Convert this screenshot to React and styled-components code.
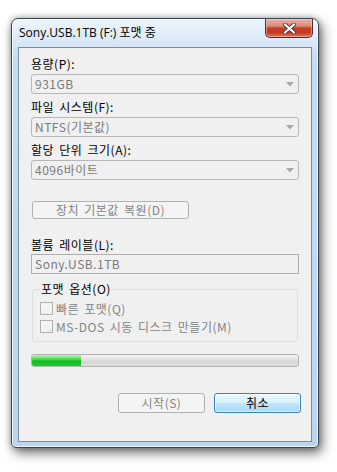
import styled, { createGlobalStyle } from "styled-components";

const Global = createGlobalStyle`
  html, body {
    margin: 0;
    background: #ffffff;
  }
  body {
    font-family: "Noto Sans CJK KR", "Noto Sans", sans-serif;
    font-size: 12px;
  }
`;

const Page = styled.div`
  padding: 18px 0 0 11px;
  width: 337px;
  height: 472px;
  box-sizing: border-box;
`;

const Window = styled.div`
  width: 308px;
  height: 430px;
  box-sizing: border-box;
  display: flex;
  flex-direction: column;
  padding: 0 6px 5px 6px;
  border: 1px solid #3a4652;
  border-radius: 7px 7px 5px 5px;
  background: linear-gradient(
    180deg,
    #eef5fc 0px,
    #dceaf8 20px,
    #c4dcf3 40px,
    #bcd5ef 100%
  );
  box-shadow: inset 0 0 0 1px rgba(255, 255, 255, 0.75),
    3px 5px 12px rgba(0, 0, 0, 0.55), 0 0 6px rgba(0, 0, 0, 0.3);
`;

const TitleBar = styled.div`
  height: 28px;
  display: flex;
  justify-content: space-between;
  align-items: flex-start;
`;

const Title = styled.div`
  padding: 6px 0 0 1px;
  line-height: 16px;
  font-size: 12px;
  color: #000;
  font-family: "Open Sans", "Noto Sans CJK KR", sans-serif;
`;

const CloseButton = styled.div`
  width: 48px;
  height: 19px;
  margin-right: -1px;
  box-sizing: border-box;
  border: 1px solid #5b2a25;
  border-top: none;
  border-radius: 0 0 5px 5px;
  background: linear-gradient(
    180deg,
    #eab3a6 0%,
    #d88b77 40%,
    #c2412a 50%,
    #c13a22 75%,
    #de7a5e 100%
  );
  box-shadow: inset 0 0 0 1px rgba(255, 220, 210, 0.45);
  display: flex;
  align-items: center;
  justify-content: center;
`;

const Client = styled.div`
  flex: 1;
  display: flex;
  flex-direction: column;
  align-items: flex-start;
  background: #f0f0f0;
  border: 1px solid #7f8e9e;
  padding: 8px 13px 0 12px;
  letter-spacing: 0.5px;
  word-spacing: 2px;
`;

const Label = styled.div`
  line-height: 16px;
  height: 16px;
  color: #000;
  margin-top: ${(p) => p.$top || 0}px;
  white-space: nowrap;
`;

const Combo = styled.div`
  width: 268px;
  height: 20px;
  box-sizing: border-box;
  margin-top: 2px;
  border: 1px solid #b4b8bb;
  border-radius: 3px;
  background: #f0f0f0;
  display: flex;
  align-items: center;
  justify-content: space-between;
  padding: 0 4px 0 3px;
  color: #7a7a7a;
  line-height: 18px;
`;

const TextBox = styled.div`
  width: 268px;
  height: 20px;
  box-sizing: border-box;
  margin-top: 1px;
  border: 1px solid #afafaf;
  background: #f0f0f0;
  padding: 0 3px;
  color: #7a7a7a;
  line-height: 18px;
`;

const Button = styled.div`
  width: ${(p) => p.$w}px;
  height: ${(p) => p.$h || 20}px;
  box-sizing: border-box;
  margin-left: ${(p) => p.$ml || 0}px;
  margin-top: ${(p) => p.$top || 0}px;
  border-radius: 3px;
  display: flex;
  align-items: center;
  justify-content: center;
  border: 1px solid ${(p) => (p.$primary ? "#3c7fb1" : "#adb2b5")};
  color: ${(p) => (p.$primary ? "#000" : "#838383")};
  background: ${(p) =>
    p.$primary
      ? "linear-gradient(180deg, #eaf6fd 0%, #d9f0fc 50%, #bee6fd 51%, #a7d9f5 100%)"
      : "#f4f4f4"};
  box-shadow: ${(p) =>
    p.$primary ? "inset 0 0 0 1px rgba(255,255,255,0.6)" : "none"};
  line-height: 16px;
`;

const Group = styled.fieldset`
  width: 266px;
  box-sizing: border-box;
  margin: 8px 0 0 1px;
  padding: 3px 7px 6px 7px;
  border: 1px solid #d5dfe5;
  border-radius: 3px;
  min-width: 0;
`;

const Legend = styled.legend`
  margin-left: 0;
  padding: 0 1px;
  line-height: 14px;
  color: #000;
`;

const CheckRow = styled.div`
  display: flex;
  align-items: center;
  height: 18px;
  gap: 3px;
  color: #858585;
  white-space: nowrap;
`;

const Box = styled.span`
  width: 13px;
  height: 13px;
  box-sizing: border-box;
  border: 1px solid #b1b1b1;
  background: linear-gradient(135deg, #f7f7f7, #eeeeee);
  flex: none;
`;

const Progress = styled.div`
  width: 268px;
  height: 13px;
  box-sizing: border-box;
  margin-top: 12px;
  border: 1px solid #b2b2b2;
  border-radius: 3px;
  overflow: hidden;
  background: linear-gradient(
    180deg,
    #f3f3f3 0%,
    #e2e2e2 45%,
    #d6d6d6 55%,
    #dfdfdf 100%
  );
`;

const Fill = styled.div`
  height: 100%;
  background: linear-gradient(
    180deg,
    #b8f5b8 0%,
    #4ad64f 40%,
    #12be1c 55%,
    #23c92d 100%
  );
`;

const Buttons = styled.div`
  display: flex;
  gap: 9px;
  margin: 26px 0 0 87px;
`;

function Arrow() {
  return (
    <svg width="8" height="5" viewBox="0 0 8 5">
      <path d="M0 0 H8 L4 4.5 Z" fill="#a8a8a8" />
    </svg>
  );
}

function CloseX() {
  return (
    <svg width="13" height="11" viewBox="0 0 13 11">
      <path
        d="M2 1.5 L11 9.5 M11 1.5 L2 9.5"
        stroke="#4a3a38"
        strokeWidth="4"
        strokeLinecap="round"
      />
      <path
        d="M2 1.5 L11 9.5 M11 1.5 L2 9.5"
        stroke="#ffffff"
        strokeWidth="2.2"
        strokeLinecap="round"
      />
    </svg>
  );
}

export default function App() {
  return (
    <Page>
      <Global />
      <Window>
        <TitleBar>
          <Title>Sony.USB.1TB (F:) 포맷 중</Title>
          <CloseButton>
            <CloseX />
          </CloseButton>
        </TitleBar>
        <Client>
          <Label>용량(P):</Label>
          <Combo>
            <span>931GB</span>
            <Arrow />
          </Combo>
          <Label $top={5}>파일 시스템(F):</Label>
          <Combo>
            <span>NTFS(기본값)</span>
            <Arrow />
          </Combo>
          <Label $top={5}>할당 단위 크기(A):</Label>
          <Combo>
            <span>4096바이트</span>
            <Arrow />
          </Combo>
          <Button $w={157} $h={18} $ml={1} $top={21}>
            장치 기본값 복원(D)
          </Button>
          <Label $top={18}>볼륨 레이블(L):</Label>
          <TextBox>Sony.USB.1TB</TextBox>
          <Group>
            <Legend>포맷 옵션(O)</Legend>
            <CheckRow>
              <Box />
              빠른 포맷(Q)
            </CheckRow>
            <CheckRow>
              <Box />
              MS-DOS 시동 디스크 만들기(M)
            </CheckRow>
          </Group>
          <Progress>
            <Fill style={{ width: `${(49 / 266) * 100}%` }} />
          </Progress>
          <Buttons>
            <Button $w={87}>시작(S)</Button>
            <Button $w={87} $primary>
              취소
            </Button>
          </Buttons>
        </Client>
      </Window>
    </Page>
  );
}
